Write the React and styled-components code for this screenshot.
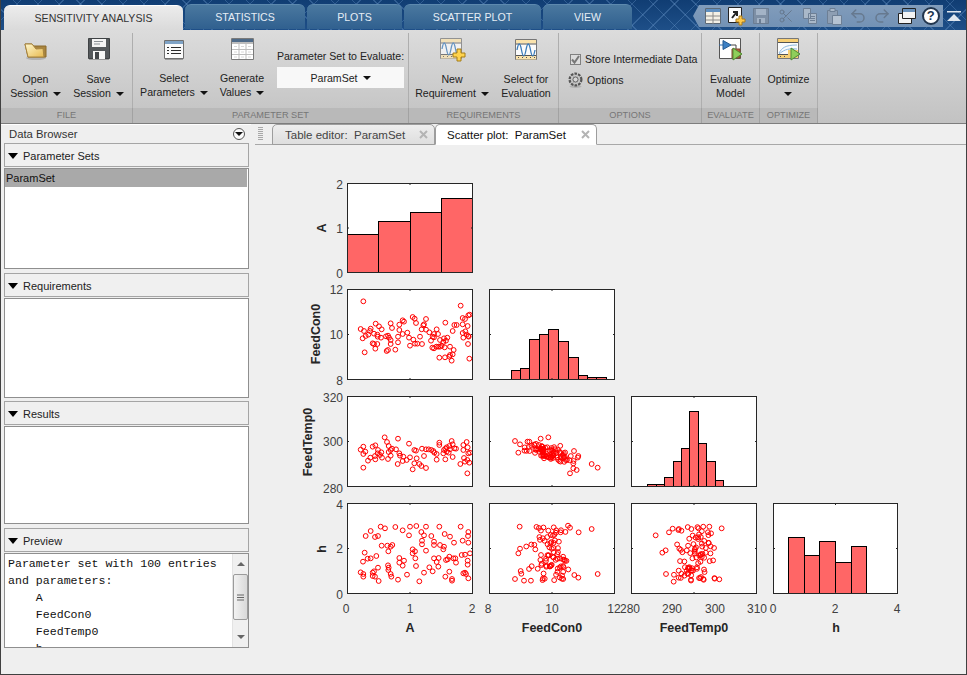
import React from "react";
import styled, { createGlobalStyle } from "styled-components";
import { Scissors, Undo2, Redo2 } from "lucide-react";

const GlobalStyle = createGlobalStyle`
  html, body { margin: 0; padding: 0; background: #efefef; }
  * { box-sizing: border-box; }
`;

const UI_FONT = `"Liberation Sans", Arial, sans-serif`;

/* ---------- plot data, read off the picture at 3x ---------- */

const seeded = (seed) => () => {
  seed = (seed * 16807) % 2147483647;
  return (seed - 1) / 2147483646;
};
const gauss = (r) => (r() + r() + r() + r() - 2) / 0.58;

// points are in 3x crop coordinates, toPage brings them back to the page
const toPage = (pts, ox, oy) => pts.map(([x, y]) => [ox + x / 3, oy + y / 3]);

const aCon = [[182,477],[190,394],[192,483],[188,505],[197,498],[205,494],[210,483],[212,476],[227,461],[237,469],[245,478],[222,491],[232,494],[233,500],[243,503],[218,520],[222,522],[232,522],[226,536],[194,547],[260,543],[264,540],[286,539],[272,510],[272,522],[294,517],[294,500],[258,499],[264,497],[267,503],[276,474],[272,460],[298,464],[298,480],[308,451],[312,455],[322,488],[327,503],[308,492],[338,441],[344,446],[348,459],[378,447],[370,466],[372,463],[365,478],[378,479],[388,487],[360,500],[340,509],[330,527],[345,521],[352,521],[366,522],[393,512],[397,533],[402,535],[402,492],[402,502],[414,492],[409,530],[415,530],[420,510],[425,527],[434,532],[450,530],[461,540],[410,478],[436,458],[458,483],[463,465],[470,465],[482,407],[488,444],[488,463],[495,447],[505,436],[509,434],[503,468],[488,489],[505,498],[506,500],[490,503],[504,522],[508,566],[455,572],[450,555],[458,553],[448,560],[435,562],[418,563],[432,505],[442,503],[438,512],[430,516],[420,530],[398,500],[496,484],[500,494]];

const aTemp = [[182,179],[190,170],[190,192],[196,185],[204,212],[190,233],[211,203],[218,170],[226,166],[226,208],[233,190],[234,180],[240,195],[246,203],[244,187],[254,142],[261,156],[266,168],[266,186],[272,197],[264,207],[276,176],[272,180],[288,178],[294,146],[298,190],[300,197],[293,222],[310,200],[308,213],[320,210],[327,161],[330,202],[338,238],[343,180],[348,182],[343,220],[350,205],[358,222],[366,176],[378,178],[378,234],[364,228],[372,198],[386,178],[394,180],[400,183],[403,188],[410,192],[410,209],[418,158],[418,165],[430,190],[436,176],[436,208],[440,172],[448,168],[450,178],[455,153],[458,163],[458,201],[463,175],[468,176],[481,222],[490,165],[490,180],[492,204],[500,156],[503,172],[505,190],[510,188],[502,210],[508,218],[502,250],[495,215],[440,185],[432,180],[446,188],[225,198]];

const aH = [[182,547],[190,552],[190,560],[189,515],[194,488],[197,438],[203,506],[212,505],[212,423],[225,441],[234,438],[229,498],[234,533],[218,548],[222,544],[218,558],[225,560],[236,573],[242,410],[255,415],[245,467],[262,467],[277,465],[272,470],[265,484],[264,526],[266,533],[265,540],[272,552],[274,560],[294,569],[286,411],[298,504],[298,518],[308,527],[312,512],[308,421],[321,554],[327,436],[330,410],[338,478],[338,490],[345,484],[346,505],[348,528],[349,408],[358,574],[364,426],[372,436],[366,452],[366,463],[378,410],[378,482],[372,548],[388,532],[398,544],[394,438],[402,455],[402,465],[402,505],[410,516],[416,504],[415,530],[418,410],[420,465],[430,478],[432,470],[434,432],[436,560],[438,510],[443,508],[448,545],[450,440],[448,500],[456,567],[456,572],[460,505],[462,458],[466,505],[468,518],[482,410],[485,495],[488,452],[490,550],[495,548],[498,552],[495,494],[503,512],[503,524],[504,438],[505,458],[505,426],[510,490],[505,565]];

const conTemp = (() => {
  const r = seeded(71);
  const out = [[645,153],[655,188],[660,163],[688,155],[875,222],[893,233],[810,250],[745,142],[722,146],[830,240],[820,235],[835,198],[822,183]];
  for (let i = 0; i < 85; i++) {
    const x = 750 + gauss(r) * 36;
    out.push([x, 188 + (x - 750) * 0.32 + gauss(r) * 11]);
  }
  return out;
})();

const conH = (() => {
  const r = seeded(503);
  const out = [[645,567],[659,410],[662,543],[672,572],[655,490],[660,476],[875,417],[893,552],[836,427],[835,563],[823,555],[804,407]];
  for (let i = 0; i < 86; i++) out.push([755 + gauss(r) * 34, 410 + r() * 165]);
  return out;
})();

const tempH = (() => {
  const r = seeded(907);
  const out = [[107,436],[138,552],[161,575],[127,488],[137,481],[305,415],[298,568],[284,566],[268,410],[147,427],[158,416],[175,420]];
  for (let i = 0; i < 86; i++) out.push([225 + gauss(r) * 28, 410 + r() * 165]);
  return out;
})();

const COLS = [[347, 472], [489, 614], [631, 756], [773, 897]];
const ROWS = [[183, 272], [289, 379], [396, 486], [503, 593]];

const hists = [
  { c: 0, r: 0, ox: 300, oy: 170, xs: [142,235,331,424,517], tops: [193,154,127,85], base: 307 },
  { c: 1, r: 1, ox: 300, oy: 170, xs: [634,661,688,718,745,775,803,833,860,889,917], tops: [601,595,508,493,478,514,562,616,622,622], base: 628 },
  { c: 2, r: 2, ox: 620, oy: 390, xs: [82,109,133,160,184,208,235,259,286,310], tops: [283,283,262,214,175,64,160,214,271], base: 289 },
  { c: 3, r: 3, ox: 620, oy: 390, xs: [505,553,598,646,694,739], tops: [442,496,454,517,469], base: 610 },
];

const scatters = [
  { c: 0, r: 1, pts: toPage(aCon, 300, 170) },
  { c: 0, r: 2, pts: toPage(aTemp, 300, 390) },
  { c: 1, r: 2, pts: toPage(conTemp, 300, 390) },
  { c: 0, r: 3, pts: toPage(aH, 300, 390) },
  { c: 1, r: 3, pts: toPage(conH, 300, 390) },
  { c: 2, r: 3, pts: toPage(tempH, 620, 390) },
];

const yTicks = [
  [["2", 185], ["1", 229], ["0", 274]],
  [["12", 290], ["10", 335], ["8", 381]],
  [["320", 398], ["300", 442], ["280", 489]],
  [["4", 505], ["2", 549], ["0", 595]],
];
const xTicks = [["0", 346], ["1", 410], ["2", 472], ["8", 488], ["10", 552], ["12", 614], ["280", 630], ["290", 672], ["300", 715], ["310", 757], ["0", 773], ["2", 835], ["4", 897]];
const xNames = [["A", 410], ["FeedCon0", 552], ["FeedTemp0", 694], ["h", 836]];
const yNames = [["A", 322, 228], ["FeedCon0", 316, 334], ["FeedTemp0", 308, 442], ["h", 322, 549]];

/* ---------- plot ---------- */

const PlotSvg = styled.svg`
  display: block;
`;
const TickText = styled.text`
  font: 12px ${UI_FONT};
  fill: #404040;
  dominant-baseline: central;
`;
const NameText = styled.text`
  font: bold 12.5px ${UI_FONT};
  fill: #262626;
  text-anchor: middle;
  dominant-baseline: central;
`;

const AxesBox = ({ c, r }) => {
  const [x0, x1] = COLS[c];
  const [y0, y1] = ROWS[r];
  const xm = (x0 + x1) / 2 + 0.5;
  const ym = (y0 + y1) / 2 + 0.5;
  return (
    <g fill="none" stroke="#262626">
      <rect x={x0 + 0.5} y={y0 + 0.5} width={x1 - x0} height={y1 - y0} />
      <path d={`M${x0} ${ym}h2M${x1} ${ym}h-1M${xm} ${y1}v-1M${xm} ${y0}v2`} />
    </g>
  );
};

const PlotMatrix = () => (
  <PlotSvg width="715" height="510" viewBox="251 145 715 510">
    {ROWS.map((row, r) => COLS.slice(0, r + 1).map((col, c) => (
      <rect key={`${r}${c}`} x={col[0]} y={row[0]} width={col[1] - col[0]} height={row[1] - row[0]} fill="#fff" />
    )))}
    {hists.map((h) =>
      h.tops.map((t, i) => (
        <rect
          key={`${h.c}-${i}`}
          x={Math.round(h.ox + h.xs[i] / 3) + 0.5}
          y={Math.round(h.oy + t / 3) + 0.5}
          width={Math.round(h.ox + h.xs[i + 1] / 3) - Math.round(h.ox + h.xs[i] / 3)}
          height={Math.round(h.oy + h.base / 3) - Math.round(h.oy + t / 3)}
          fill="#ff6666"
          stroke="#000"
        />
      ))
    )}
    {scatters.map((s) => (
      <g key={`${s.c}${s.r}`} fill="none" stroke="#ff0000" strokeWidth="1">
        {s.pts.map(([x, y], i) => (
          <circle key={i} cx={x} cy={y} r="2.4" />
        ))}
      </g>
    ))}
    {ROWS.map((row, r) => COLS.slice(0, r + 1).map((col, c) => <AxesBox key={`${r}${c}`} c={c} r={r} />))}
    {yTicks.map((row) =>
      row.map(([t, y]) => (
        <TickText key={t + y} x="343" y={y} textAnchor="end">{t}</TickText>
      ))
    )}
    {xTicks.map(([t, x]) => (
      <TickText key={t + x} x={x} y="609" textAnchor="middle">{t}</TickText>
    ))}
    {xNames.map(([t, x]) => (
      <NameText key={t} x={x} y="628">{t}</NameText>
    ))}
    {yNames.map(([t, x, y]) => (
      <NameText key={t} x={x} y={y} transform={`rotate(-90 ${x} ${y})`}>{t}</NameText>
    ))}
  </PlotSvg>
);

/* ---------- icons ---------- */

const Drawn = styled.svg`
  display: block;
  flex: none;
  overflow: visible;
`;

const FolderIcon = () => (
  <Drawn width="24" height="22" viewBox="0 0 24 22">
    <defs>
      <linearGradient id="fold" x1="0" y1="0" x2="1" y2="1">
        <stop offset="0" stopColor="#fff8cf" />
        <stop offset="1" stopColor="#e7b94e" />
      </linearGradient>
    </defs>
    <ellipse cx="12" cy="19" rx="10" ry="2" fill="#8a8a8a" opacity="0.45" />
    <path d="M1 5h7l2 2h12v11H4z" fill="#a9853f" stroke="#8c6a2a" />
    <path d="M1 5h7l4 5 7-.5L20 18H4z" fill="url(#fold)" stroke="#a9853f" />
  </Drawn>
);

const SaveIcon = () => (
  <Drawn width="22" height="23" viewBox="0 0 22 23">
    <path d="M.5.5h21v20H.5z" fill="#55595c" stroke="#3f4244" />
    <path d="M4 1h14v8H4z" fill="#f4f4f4" />
    <path d="M6 3.5h9M6 6h6" stroke="#8b9196" />
    <path d="M5 13h12v8H5z" fill="#f7f7f7" />
    <path d="M7 14h4v7H7z" fill="#44474a" />
    <path d="M1 21.5h20" stroke="#9a9a9a" />
  </Drawn>
);

const ListIcon = () => (
  <Drawn width="20" height="20" viewBox="0 0 20 20">
    <path d="M.5.5h19v18H.5z" fill="#fbfbfb" stroke="#6f6f6f" />
    <path d="M1 1h18v3H1z" fill="#7fa3c6" />
    <path d="M3 7.5h2M7 7.5h10M3 10.5h2M7 10.5h10M3 13.5h2M7 13.5h10" stroke="#2c2c2c" />
    <path d="M1 19.5h18" stroke="#9a9a9a" />
  </Drawn>
);

const TableIcon = () => (
  <Drawn width="23" height="23" viewBox="0 0 23 23">
    <path d="M.5.5h22v21H.5z" fill="#fff" stroke="#7a7a7a" />
    <path d="M1 1h21v3H1z" fill="#4e6a88" />
    <path d="M1 5h21" stroke="#bdbdbd" strokeWidth="2" />
    <path d="M8 6v15M15 6v15M1 11.5h21M1 16.5h21" stroke="#bdbdbd" />
    <path d="M3 8.5h3M10 8.5h3M17 8.5h3M3 14h3M10 14h3M17 14h3M3 19h3M10 19h3M17 19h3" stroke="#d8d8d8" />
  </Drawn>
);

const WAVE = "M2 12c1.5-8 3-8 4.5 0s3 8 4.5 0 3-8 4.5 0 3 8 4.5 0";

const ReqFrame = ({ faded }) => (
  <g opacity={faded ? 0.72 : 1}>
    <path d="M.5.5h21v20H.5z" fill="#fbfbfb" stroke="#777" />
    <path d="M1 1h20v3.5H1zM1 17h20v3.5H1z" fill="#fbe3ac" />
    <path d="M1 5h20M1 16.5h20" stroke="#555" />
    <path d={WAVE} transform="translate(0 -1)" fill="none" stroke="#3b7cba" strokeWidth="1.3" />
    <path d="M3 18.5h1M7 18.5h1M11 18.5h1M15 18.5h1M19 18.5h1" stroke="#555" />
  </g>
);

const NewReqIcon = () => (
  <Drawn width="24" height="24" viewBox="0 0 24 24">
    <ReqFrame faded />
    <path d="M17 11h4v4h4v4h-4v4h-4v-4h-4v-4h4z" fill="#ffd34d" stroke="#a47d18" />
  </Drawn>
);

const SelectReqIcon = () => (
  <Drawn width="22" height="22" viewBox="0 0 22 22">
    <ReqFrame />
  </Drawn>
);

const EvaluateIcon = () => (
  <Drawn width="24" height="24" viewBox="0 0 24 24">
    <path d="M.5.5h21v20H.5z" fill="#fff" stroke="#555" />
    <path d="M0 7h4" stroke="#2d6fb2" />
    <path d="M4 2.5l8 4.5-8 4.5z" fill="#3c80c4" stroke="#245b92" />
    <path d="M12 7h5v4" fill="none" stroke="#444" />
    <path d="M13 11h8v9h-8z" fill="#c4583d" stroke="#7e4a2c" />
    <path d="M14 10l9 6-9 6z" fill="#8fce5a" stroke="#4f8a34" />
  </Drawn>
);

const OptimizeIcon = () => (
  <Drawn width="24" height="24" viewBox="0 0 24 24">
    <path d="M.5.5h21v20H.5z" fill="#fbfbfb" stroke="#777" />
    <path d="M1 1h20v3H1zM11 12h10v8H11zM1 17h10v3H1z" fill="#f8cf74" />
    <path d="M1 4.5h20M1 16.5h10" stroke="#555" />
    <path d="M2 15c3-5 6-8 18-8M2 16c4-3 7-6 18-5" fill="none" stroke="#8ab7df" />
    <path d="M3 18.5h1M7 18.5h1" stroke="#555" />
    <path d="M14 10l9 6-9 6z" fill="#8fce5a" stroke="#4f8a34" />
  </Drawn>
);

const GearIcon = () => (
  <Drawn width="15" height="16" viewBox="0 0 15 16">
    <ellipse cx="7.5" cy="14.5" rx="6" ry="1.5" fill="#8a8a8a" opacity="0.4" />
    <circle cx="7.5" cy="7.5" r="5.4" fill="none" stroke="#555" strokeWidth="3.2" strokeDasharray="2.4 1" />
    <circle cx="7.5" cy="7.5" r="4.2" fill="none" stroke="#c4c4c4" strokeWidth="1.2" />
    <circle cx="7.5" cy="7.5" r="2.6" fill="#d6d6d6" stroke="#5c5c5c" />
  </Drawn>
);

const QatTableIcon = () => (
  <Drawn width="16" height="16" viewBox="0 0 16 16">
    <path d="M.5.5h15v15H.5z" fill="#f3f0e6" stroke="#5e6a76" />
    <path d="M1 1h14v3H1z" fill="#5f8fc0" />
    <path d="M1 8h14M1 12h14M8 4v12" stroke="#8a8a8a" />
  </Drawn>
);

const QatNewIcon = () => (
  <Drawn width="18" height="18" viewBox="0 0 18 18">
    <path d="M.5.5h13v15H.5z" fill="#fdfdfd" stroke="#222" />
    <path d="M4 11l4-5M5 5h4v4" fill="none" stroke="#222" strokeWidth="2" />
    <path d="M11 9h3v3h3v3h-3v3h-3v-3H8v-3h3z" fill="#ffc94a" stroke="#a87b1e" />
  </Drawn>
);

const OffSave = () => (
  <Drawn width="16" height="16" viewBox="0 0 16 16">
    <path d="M.5.5h15v15H.5z" fill="#7d8fa5" stroke="#6b7d93" />
    <path d="M3 1h10v6H3zM4 10h8v5H4z" fill="#a3b3c6" />
    <path d="M6 11h2v4H6z" fill="#6b7d93" />
  </Drawn>
);

const OffCopy = () => (
  <Drawn width="14" height="16" viewBox="0 0 14 16">
    <path d="M.5.5h7v10h-7zM5.500 5.500h8v10h-8z" fill="#a9b8c9" stroke="#6d7f95" />
    <path d="M7 8.5h5M7 10.500h5M7 12.500h5" stroke="#6d7f95" />
  </Drawn>
);

const OffPaste = () => (
  <Drawn width="15" height="17" viewBox="0 0 15 17">
    <path d="M.5 2.5h10v13H.5z" fill="#8d9eb3" stroke="#6d7f95" />
    <path d="M3 .5h5v3H3z" fill="#a9b8c9" stroke="#6d7f95" />
    <path d="M5.5 7.5h9v9h-9z" fill="#b6c3d2" stroke="#6d7f95" />
  </Drawn>
);

const QatWindowIcon = () => (
  <Drawn width="18" height="16" viewBox="0 0 18 16">
    <path d="M.5 5.5h13v10H.5z" fill="#f4f4f4" stroke="#222" />
    <path d="M4.5.5h13v10h-13z" fill="#f4f4f4" stroke="#222" />
    <path d="M5 1h12v3H5z" fill="#6b93bc" />
  </Drawn>
);

const CollapseIcon = () => (
  <Drawn width="14" height="10" viewBox="0 0 14 10">
    <path d="M0 0h14v1.5H0zM7 3l7 7H0z" fill="#dfe6ee" />
  </Drawn>
);

/* ---------- window + title bar ---------- */

const Window = styled.div`
  width: 967px;
  height: 675px;
  overflow: hidden;
  display: flex;
  flex-direction: column;
  background: #efefef;
  border: solid #404040;
  border-width: 0 1px 1px 1px;
  font-family: ${UI_FONT};
  font-size: 10.6px;
  color: #222;
`;

const TitleBar = styled.div`
  height: 30px;
  flex: none;
  display: flex;
  align-items: flex-end;
  padding-left: 3px;
  gap: 2px;
  position: relative;
  background:
    repeating-linear-gradient(45deg, transparent 0 14px, rgba(120, 165, 215, 0.3) 14px 15px),
    repeating-linear-gradient(-45deg, transparent 0 14px, rgba(120, 165, 215, 0.3) 14px 15px),
    linear-gradient(#103d73, #1e4f88);
`;

const Tab = styled.div`
  width: ${(p) => p.$w}px;
  height: 25px;
  display: flex;
  align-items: center;
  justify-content: center;
  border-radius: 6px 6px 0 0;
  text-transform: uppercase;
  color: ${(p) => (p.$active ? "#333" : "#e6edf5")};
  background: ${(p) => (p.$active ? "linear-gradient(#ececec, #dadada)" : "linear-gradient(#4a789f, #30608f)")};
  margin-bottom: ${(p) => (p.$active ? "0" : "1px")};
  border-top: 1px solid ${(p) => (p.$active ? "#fff" : "#5d89ae")};
`;

const Qat = styled.div`
  position: absolute;
  left: 692px;
  top: 5px;
  width: 250px;
  height: 22px;
  display: flex;
  align-items: center;
  clip-path: polygon(6px 0, 100% 0, 100% 100%, 6px 100%, 0 50%);
  background: linear-gradient(#819cbb, #7392b5);
`;

const QatSlot = styled.div`
  width: 24.2px;
  flex: none;
  display: flex;
  justify-content: center;
  color: #66798f;
  &:first-child { margin-left: 8px; }
`;

const HelpBadge = styled.div`
  width: 18px;
  height: 18px;
  border-radius: 50%;
  background: #fff;
  border: 2px solid #22364e;
  color: #22364e;
  font: bold 13px/14px ${UI_FONT};
  text-align: center;
`;

const CollapseBtn = styled.div`
  position: absolute;
  left: 946px;
  top: 11px;
`;

/* ---------- ribbon ---------- */

const Ribbon = styled.div`
  height: 94px;
  flex: none;
  display: flex;
  padding-top: 3px;
  background: linear-gradient(#dcdcdc, #c2c2c2);
  border-bottom: 1px solid #7d7d7d;
`;

const Group = styled.div`
  width: ${(p) => p.$w}px;
  flex: none;
  display: flex;
  flex-direction: column;
`;

const GroupBody = styled.div`
  height: 75px;
  display: flex;
  padding-left: ${(p) => p.$pad || 0}px;
  border-right: 1px solid #aeaeae;
`;

const GroupLabel = styled.div`
  height: 15px;
  line-height: 15px;
  font-size: 9.2px;
  text-align: center;
  text-transform: uppercase;
  color: #767676;
  background: #b9b9b9;
  border-right: 1px solid #a2a2a2;
`;

const RibbonButton = styled.div`
  width: ${(p) => p.$w}px;
  flex: none;
  display: flex;
  flex-direction: column;
  align-items: center;
`;

const IconBox = styled.div`
  height: 33px;
  flex: none;
  display: flex;
  align-items: center;
  justify-content: center;
`;

const ButtonText = styled.div`
  margin-top: ${(p) => p.$top || 6}px;
  line-height: 14px;
  text-align: center;
  white-space: nowrap;
  color: #222;
`;

const Caret = styled.span`
  display: inline-block;
  vertical-align: middle;
  margin-left: ${(p) => p.$gap ?? 5}px;
  width: 0;
  height: 0;
  border: 4px solid transparent;
  border-top: 4px solid ${(p) => p.$c || "#111"};
  border-bottom: 0;
  transform: ${(p) => (p.$up ? "rotate(180deg)" : "none")};
`;

const EvalColumn = styled.div`
  width: 127px;
  margin-left: 2px;
  padding-top: 17px;
  display: flex;
  flex-direction: column;
  align-items: center;
  white-space: nowrap;
`;

const EvalSelect = styled.div`
  width: 100%;
  height: 21px;
  margin-top: 5px;
  background: #f8f8f8;
  display: flex;
  align-items: center;
  justify-content: center;
`;

const OptionsList = styled.div`
  padding: 19px 0 0 9px;
  display: flex;
  flex-direction: column;
  gap: 6px;
`;

const OptionRow = styled.label`
  display: flex;
  align-items: center;
  gap: ${(p) => p.$gap}px;
  height: ${(p) => p.$h}px;
  white-space: nowrap;
  margin-left: ${(p) => p.$left || 0}px;
`;

const FakeCheck = styled.span`
  width: 11px;
  height: 11px;
  margin-left: 1px;
  border: 1px solid #808080;
  background: #dcdcdc;
  display: flex;
  align-items: center;
  justify-content: center;
`;

/* ---------- lower part ---------- */

const Main = styled.div`
  flex: 1;
  min-height: 0;
  display: flex;
`;

const Browser = styled.div`
  width: 250px;
  flex: none;
  display: flex;
  flex-direction: column;
`;

const BrowserHead = styled.div`
  height: 19px;
  flex: none;
  padding: 0 5px 0 8px;
  display: flex;
  align-items: center;
  justify-content: space-between;
  font-size: 11.3px;
  color: #333;
  border-top: 1px solid #fff;
`;

const CircleMenu = styled.span`
  width: 12px;
  height: 12px;
  margin-right: 1px;
  border-radius: 50%;
  border: 1px solid #555;
  background: #fbfbfb;
  display: flex;
  align-items: center;
  justify-content: center;
`;

const SectionHead = styled.div`
  height: 24px;
  margin-left: 3px;
  width: 245px;
  flex: none;
  display: flex;
  align-items: center;
  padding: 1px 0 0 3px;
  gap: 5px;
  font-size: 11px;
  background: #f0f0f0;
  border: 1px solid #a5a5a5;
`;

const SectionArrow = styled.span`
  width: 0;
  height: 0;
  border: 5.5px solid transparent;
  border-top: 6px solid #000;
  border-bottom: 0;
`;

const SectionBody = styled.div`
  height: ${(p) => p.$h}px;
  margin: 1px 0 ${(p) => p.$gap}px 3px;
  width: 245px;
  flex: none;
  background: #fff;
  border: 1px solid #8f8f8f;
  font-size: 11px;
  overflow: hidden;
  display: flex;
`;

const SelectedRow = styled.div`
  width: 242px;
  height: 18px;
  line-height: 18px;
  padding-left: 1px;
  background: #a9a9a9;
  color: #111;
`;

const PreviewText = styled.pre`
  flex: 1;
  margin: 0;
  padding: 1px 0 0 3px;
  font: 11.6px/17px "Liberation Mono", "Courier New", monospace;
  color: #111;
  overflow: hidden;
`;

const ScrollBar = styled.div`
  width: 16px;
  flex: none;
  display: flex;
  flex-direction: column;
  align-items: center;
  background: #f0f0f0;
  border-left: 1px solid #e3e3e3;
`;

const ScrollArrow = styled.span`
  height: 20px;
  flex: none;
  display: flex;
  align-items: center;
  justify-content: center;
`;

const ScrollThumb = styled.div`
  width: 15px;
  height: 46px;
  flex: none;
  border: 1px solid #9b9b9b;
  border-radius: 2px;
  background: linear-gradient(90deg, #f2f2f2, #d9d9d9);
  display: flex;
  align-items: center;
  justify-content: center;
`;

const ScrollSpace = styled.div`
  flex: 1;
`;

const Pane = styled.div`
  flex: 1;
  min-width: 0;
  display: flex;
  flex-direction: column;
`;

const DocBar = styled.div`
  height: 21px;
  flex: none;
  margin-left: 4px;
  display: flex;
  align-items: flex-end;
  border-bottom: 1px solid #a8a8a8;
`;

const Grip = styled.div`
  width: 5px;
  height: 14px;
  margin: 0 9px 3px 3px;
  background: repeating-linear-gradient(#a8a8a8 0 1px, transparent 1px 2px);
`;

const DocTab = styled.div`
  width: ${(p) => p.$w}px;
  height: 21px;
  margin-bottom: -1px;
  padding: 0 4px 0 ${(p) => p.$pad}px;
  display: flex;
  align-items: center;
  justify-content: space-between;
  white-space: pre;
  font-size: 11.5px;
  color: ${(p) => (p.$active ? "#111" : "#444")};
  background: ${(p) => (p.$active ? "#fff" : "linear-gradient(#eeeeee, #dedede)")};
  border: 1px solid #9d9d9d;
  border-bottom-color: ${(p) => (p.$active ? "#fff" : "#9d9d9d")};
  border-radius: 5px 5px 0 0;
`;

const CloseMark = styled(Drawn)`
  margin-right: 2px;
`;

const CloseX = () => (
  <CloseMark width="9" height="9" viewBox="0 0 9 9">
    <path d="M1 1l7 7M8 1l-7 7" stroke="#b4b4b4" strokeWidth="2" />
  </CloseMark>
);

const Section = ({ title, h, gap, children }) => (
  <>
    <SectionHead>
      <SectionArrow />
      {title}
    </SectionHead>
    <SectionBody $h={h} $gap={gap}>{children}</SectionBody>
  </>
);

const PREVIEW = `Parameter set with 100 entries
and parameters:
    A
    FeedCon0
    FeedTemp0
    h`;

const App = () => (
  <>
    <GlobalStyle />
    <Window>
      <TitleBar>
        <Tab $active $w={179}>Sensitivity Analysis</Tab>
        <Tab $w={120}>Statistics</Tab>
        <Tab $w={95}>Plots</Tab>
        <Tab $w={137}>Scatter Plot</Tab>
        <Tab $w={89}>View</Tab>
        <Qat>
          <QatSlot><QatTableIcon /></QatSlot>
          <QatSlot><QatNewIcon /></QatSlot>
          <QatSlot><OffSave /></QatSlot>
          <QatSlot><Scissors size={16} strokeWidth={1.5} /></QatSlot>
          <QatSlot><OffCopy /></QatSlot>
          <QatSlot><OffPaste /></QatSlot>
          <QatSlot><Undo2 size={18} strokeWidth={2} /></QatSlot>
          <QatSlot><Redo2 size={18} strokeWidth={2} /></QatSlot>
          <QatSlot><QatWindowIcon /></QatSlot>
          <QatSlot><HelpBadge>?</HelpBadge></QatSlot>
        </Qat>
        <CollapseBtn><CollapseIcon /></CollapseBtn>
      </TitleBar>

      <Ribbon>
        <Group $w={132}>
          <GroupBody $pad={3}>
            <RibbonButton $w={63}>
              <IconBox><FolderIcon /></IconBox>
              <ButtonText>Open<br />Session<Caret /></ButtonText>
            </RibbonButton>
            <RibbonButton $w={63}>
              <IconBox><SaveIcon /></IconBox>
              <ButtonText>Save<br />Session<Caret /></ButtonText>
            </RibbonButton>
          </GroupBody>
          <GroupLabel>File</GroupLabel>
        </Group>

        <Group $w={276}>
          <GroupBody $pad={6}>
            <RibbonButton $w={70}>
              <IconBox><ListIcon /></IconBox>
              <ButtonText $top={5}>Select<br />Parameters<Caret /></ButtonText>
            </RibbonButton>
            <RibbonButton $w={66}>
              <IconBox><TableIcon /></IconBox>
              <ButtonText $top={5}>Generate<br />Values<Caret /></ButtonText>
            </RibbonButton>
            <EvalColumn>
              Parameter Set to Evaluate:
              <EvalSelect>ParamSet<Caret /></EvalSelect>
            </EvalColumn>
          </GroupBody>
          <GroupLabel>Parameter Set</GroupLabel>
        </Group>

        <Group $w={150}>
          <GroupBody>
            <RibbonButton $w={86}>
              <IconBox><NewReqIcon /></IconBox>
              <ButtonText>New<br />Requirement<Caret /></ButtonText>
            </RibbonButton>
            <RibbonButton $w={62}>
              <IconBox><SelectReqIcon /></IconBox>
              <ButtonText>Select for<br />Evaluation</ButtonText>
            </RibbonButton>
          </GroupBody>
          <GroupLabel>Requirements</GroupLabel>
        </Group>

        <Group $w={143}>
          <GroupBody>
            <OptionsList>
              <OptionRow $gap={4} $h={14} $left={1}>
                <FakeCheck>
                  <Drawn width="9" height="9" viewBox="0 0 9 9">
                    <path d="M1 4.5l2.5 3L8 1" fill="none" stroke="#777" strokeWidth="2" />
                  </Drawn>
                </FakeCheck>
                Store Intermediate Data
              </OptionRow>
              <OptionRow $gap={4} $h={16}>
                <GearIcon />
                Options
              </OptionRow>
            </OptionsList>
          </GroupBody>
          <GroupLabel>Options</GroupLabel>
        </Group>

        <Group $w={58}>
          <GroupBody>
            <RibbonButton $w={57}>
              <IconBox><EvaluateIcon /></IconBox>
              <ButtonText>Evaluate<br />Model</ButtonText>
            </RibbonButton>
          </GroupBody>
          <GroupLabel>Evaluate</GroupLabel>
        </Group>

        <Group $w={58}>
          <GroupBody>
            <RibbonButton $w={57}>
              <IconBox><OptimizeIcon /></IconBox>
              <ButtonText>Optimize<br /><Caret $gap={0} /></ButtonText>
            </RibbonButton>
          </GroupBody>
          <GroupLabel>Optimize</GroupLabel>
        </Group>
      </Ribbon>

      <Main>
        <Browser>
          <BrowserHead>
            Data Browser
            <CircleMenu><Caret $gap={0} /></CircleMenu>
          </BrowserHead>
          <Section title="Parameter Sets" h={101} gap={4}>
            <SelectedRow>ParamSet</SelectedRow>
          </Section>
          <Section title="Requirements" h={100} gap={3} />
          <Section title="Results" h={98} gap={4} />
          <Section title="Preview" h={95} gap={0}>
            <PreviewText>{PREVIEW}</PreviewText>
            <ScrollBar>
              <ScrollArrow><Caret $gap={0} $up $c="#666" /></ScrollArrow>
              <ScrollThumb>
                <Drawn width="7" height="7" viewBox="0 0 7 7">
                  <path d="M0 1h7M0 3.5h7M0 6h7" stroke="#666" />
                </Drawn>
              </ScrollThumb>
              <ScrollSpace />
              <ScrollArrow><Caret $gap={0} $c="#666" /></ScrollArrow>
            </ScrollBar>
          </Section>
        </Browser>

        <Pane>
          <DocBar>
            <Grip />
            <DocTab $w={163} $pad={12}>
              {"Table editor:  ParamSet"}
              <CloseX />
            </DocTab>
            <DocTab $active $w={162} $pad={11}>
              {"Scatter plot:  ParamSet"}
              <CloseX />
            </DocTab>
          </DocBar>
          <PlotMatrix />
        </Pane>
      </Main>
    </Window>
  </>
);

export default App;
